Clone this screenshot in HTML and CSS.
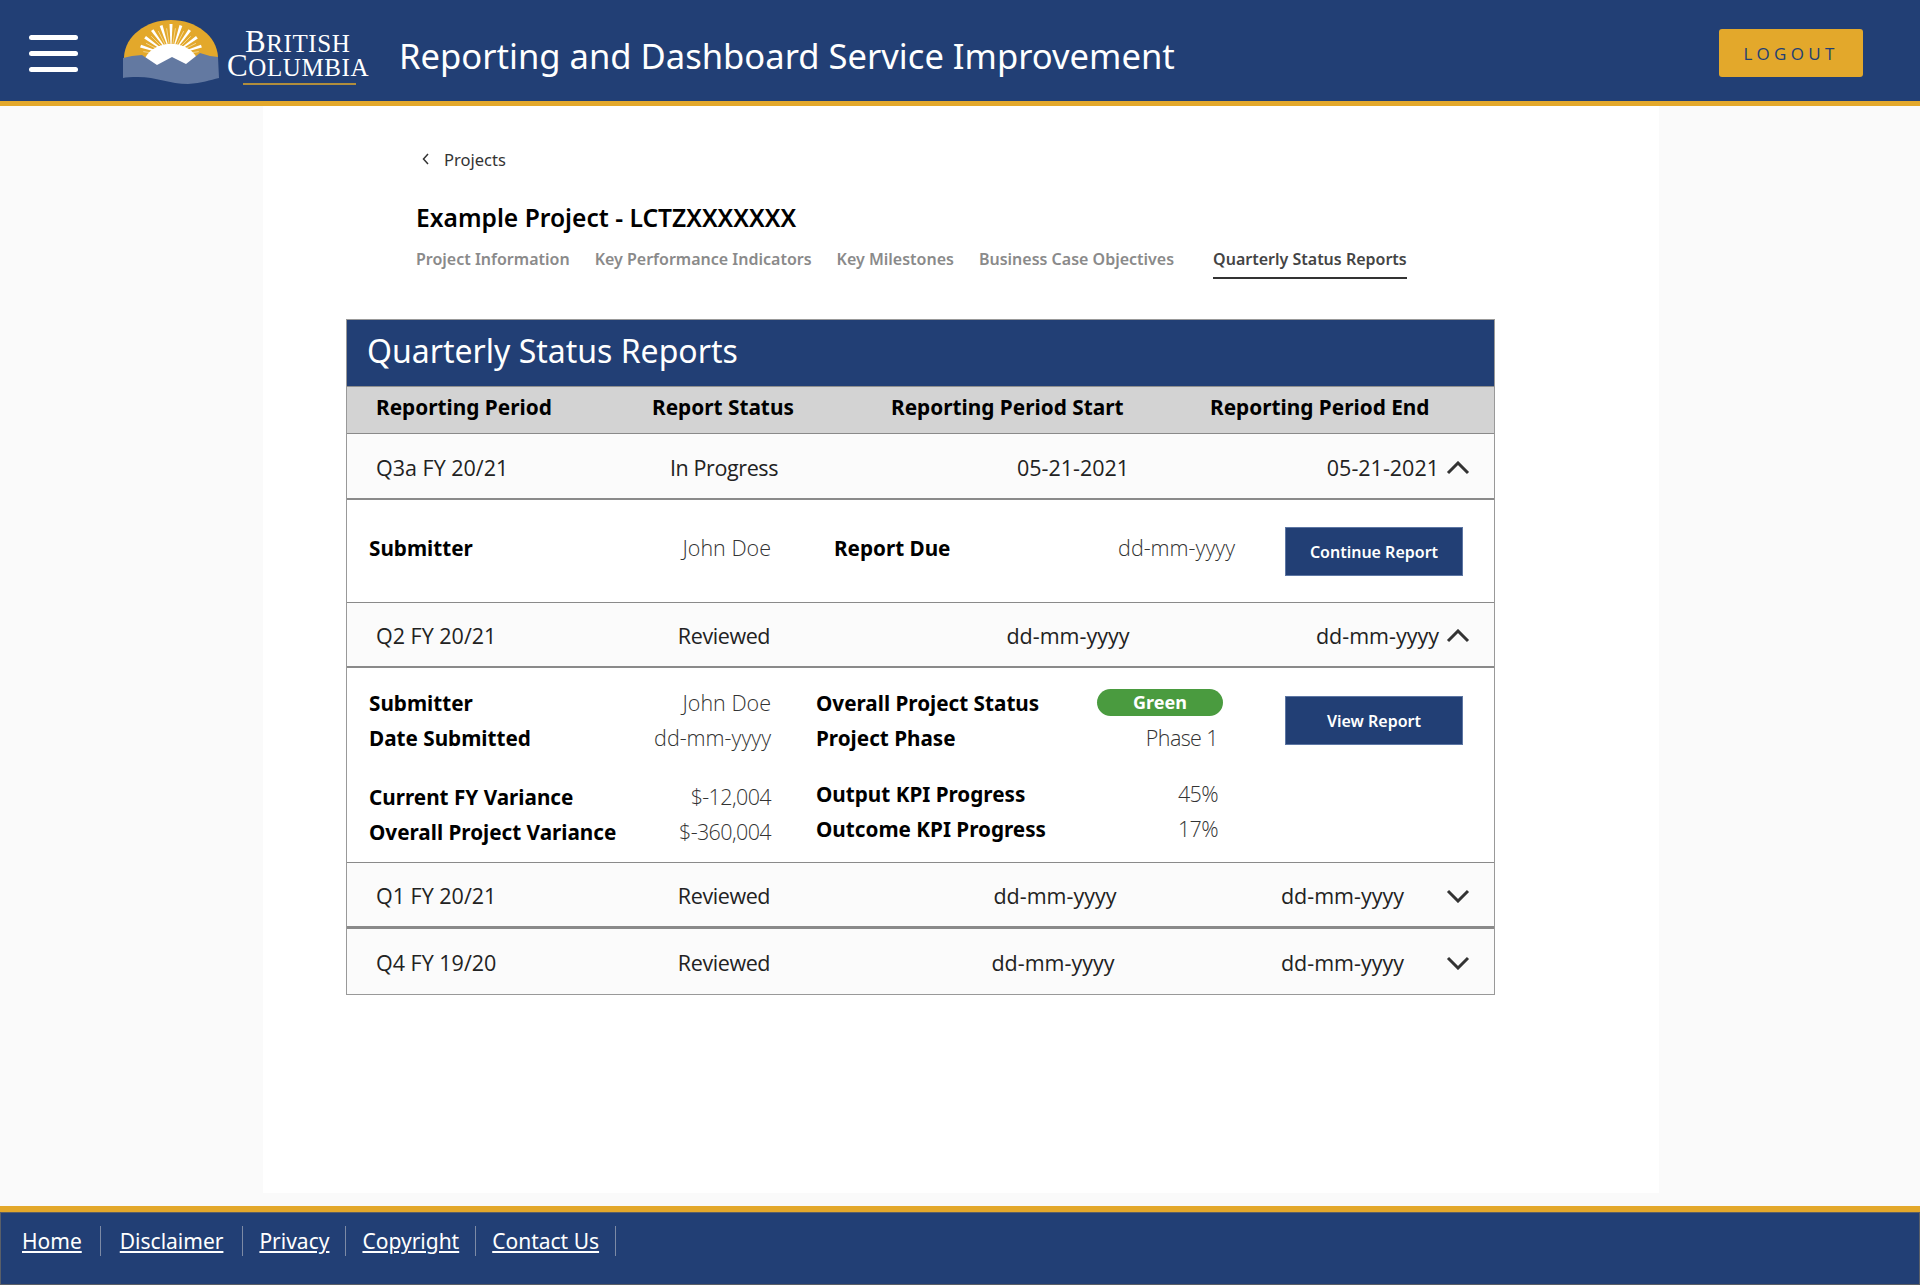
FILE: index.html
```html
<!doctype html>
<html lang="en">
  <head>
    <title>Reporting and Dashboard Service Improvement</title>
    <meta charset="utf-8" />
    <link rel="stylesheet" href="styles.css">
  </head>
  <body>
    <header class="site_header">
      <div class="hamburger"><span></span><span></span><span></span></div>
      <div class="logo">
        <svg class="logo_mark" width="100" height="68" viewBox="0 0 100 68">
          <path d="M2 40 L2 37 C3 16 24 0 49 0 C74 0 95 16 96 37 L96 40 Z" fill="#e3a82b"/>
          <g fill="#fff">
            <path d="M49 36 L47.500 4 L50.500 4 Z"/>
            <path d="M49 36 L57.500 5.100 L60.300 6.100 Z"/>
            <path d="M49 36 L66.600 9.200 L69 11 Z"/>
            <path d="M49 36 L74 16 L75.800 18.400 Z"/>
            <path d="M49 36 L78.900 24.700 L79.900 27.500 Z"/>
            <path d="M49 36 L40.500 5.100 L37.700 6.100 Z"/>
            <path d="M49 36 L31.400 9.200 L29 11 Z"/>
            <path d="M49 36 L24 16 L22.200 18.400 Z"/>
            <path d="M49 36 L19.100 24.700 L18.100 27.500 Z"/>
          </g>
          <path d="M49 36 L53.400 8.300 M49 36 L61.700 11.100 M49 36 L68.800 16.200 M49 36 L74 23.300 M49 36 L76.700 31.600 M49 36 L44.600 8.300 M49 36 L36.300 11.100 M49 36 L29.200 16.200 M49 36 L24 23.300 M49 36 L21.300 31.600" stroke="#f6dfa6" stroke-width="0.8" fill="none"/>
          <path d="M21 46 C22 32 35 24 49 24 C63 24 76 32 77 46 Z" fill="#fff"/>
          <path d="M1 38 L10 36 L20 35 L35 45 L50 37 L64 44 L78 33 L88 36 L96 37 L97 58 C88 60 80 63 66 64 C48 64 34 57 16 57 C9 57 4 57 1 58 Z" fill="#6379a1"/>
        </svg>
        <div class="logo_text">
          <div class="logo_line1"><span class="cap">B</span>RITISH</div>
          <div class="logo_line2"><span class="cap">C</span>OLUMBIA</div>
          <div class="logo_rule"></div>
        </div>
      </div>
      <h1 class="app_title">Reporting and Dashboard Service Improvement</h1>
      <button class="logout">LOGOUT</button>
    </header>

    <main class="page">
      <div class="page_head">
        <a class="back" href="#">
          <svg width="10" height="14" viewBox="0 0 10 14"><path d="M7 2 L2.5 7 L7 12" fill="none" stroke="#333" stroke-width="1.5"/></svg>
          <span>Projects</span>
        </a>
        <h2 class="project_name">Example Project - LCTZXXXXXXX</h2>
        <nav class="tabs">
          <a href="#">Project Information</a>
          <a href="#">Key Performance Indicators</a>
          <a href="#">Key Milestones</a>
          <a href="#">Business Case Objectives</a>
          <a href="#" class="tab_active">Quarterly Status Reports</a>
        </nav>
      </div>

      <section class="reports">
        <h3 class="reports_title">Quarterly Status Reports</h3>
        <div class="reports_head">
          <div>Reporting Period</div>
          <div>Report Status</div>
          <div>Reporting Period Start</div>
          <div>Reporting Period End</div>
        </div>

        <!-- Q3a -->
        <div class="row row_q3a">
          <div>Q3a FY 20/21</div>
          <div class="status">In Progress</div>
          <div class="start">05-21-2021</div>
          <div class="end">05-21-2021</div>
          <svg class="chevron" width="24" height="14" viewBox="0 0 24 14"><path d="M2 12 L12 2 L22 12" fill="none" stroke="#333" stroke-width="3"/></svg>
        </div>
        <div class="detail detail_short">
          <div class="pair pair_left"><b>Submitter</b><span>John Doe</span></div>
          <div class="pair pair_due"><b>Report Due</b><span>dd-mm-yyyy</span></div>
          <button class="action">Continue Report</button>
        </div>

        <!-- Q2 -->
        <div class="row row_q2">
          <div>Q2 FY 20/21</div>
          <div class="status">Reviewed</div>
          <div class="start">dd-mm-yyyy</div>
          <div class="end">dd-mm-yyyy</div>
          <svg class="chevron" width="24" height="14" viewBox="0 0 24 14"><path d="M2 12 L12 2 L22 12" fill="none" stroke="#333" stroke-width="3"/></svg>
        </div>
        <div class="detail detail_full">
          <div class="col_left">
            <div class="pair"><b>Submitter</b><span>John Doe</span></div>
            <div class="pair"><b>Date Submitted</b><span>dd-mm-yyyy</span></div>
            <div class="pair pair_gap"><b>Current FY Variance</b><span class="num">$-12,004</span></div>
            <div class="pair"><b>Overall Project Variance</b><span class="num">$-360,004</span></div>
          </div>
          <div class="col_mid">
            <div class="pair"><b>Overall Project Status</b><em class="pill">Green</em></div>
            <div class="pair"><b>Project Phase</b><span class="num">Phase 1</span></div>
            <div class="pair pair_gap2"><b>Output KPI Progress</b><span class="num">45%</span></div>
            <div class="pair"><b>Outcome KPI Progress</b><span class="num">17%</span></div>
          </div>
          <button class="action">View Report</button>
        </div>

        <!-- Q1 -->
        <div class="row row_q1">
          <div>Q1 FY 20/21</div>
          <div class="status">Reviewed</div>
          <div class="start">dd-mm-yyyy</div>
          <div class="end">dd-mm-yyyy</div>
          <svg class="chevron" width="24" height="14" viewBox="0 0 24 14"><path d="M2 2 L12 12 L22 2" fill="none" stroke="#333" stroke-width="3"/></svg>
        </div>

        <!-- Q4 -->
        <div class="row row_q4">
          <div>Q4 FY 19/20</div>
          <div class="status">Reviewed</div>
          <div class="start">dd-mm-yyyy</div>
          <div class="end">dd-mm-yyyy</div>
          <svg class="chevron" width="24" height="14" viewBox="0 0 24 14"><path d="M2 2 L12 12 L22 2" fill="none" stroke="#333" stroke-width="3"/></svg>
        </div>
      </section>
    </main>

    <footer class="site_footer">
      <a href="#">Home</a>
      <a href="#">Disclaimer</a>
      <a href="#">Privacy</a>
      <a href="#">Copyright</a>
      <a href="#">Contact Us</a>
    </footer>
  </body>
</html>
```

FILE: styles.css
```css
/* Whole page */
*{
  box-sizing: border-box;
}
body{
  margin: 0;
  min-height: 1285px;
  display: flex;
  flex-direction: column;
  background-color: #fafafa;
  color: #000;
  font-family: "Noto Sans", sans-serif;
}
h1, h2, h3{
  margin: 0;
  font-weight: 400;
}

/* Header */
.site_header{
  height: 106px;
  display: flex;
  align-items: center;
  padding: 5px 57px 0 29px;
  background-color: #223f75;
  border-bottom: 5px solid #e3a82b;
}
.hamburger{
  width: 49px;
  display: flex;
  flex-direction: column;
  gap: 11px;
  margin-right: 44px;
}
.hamburger span{
  height: 5px;
  border-radius: 3px;
  background-color: #fff;
}
.logo{
  display: flex;
  align-items: flex-start;
  width: 277px;
  height: 68px;
  margin-top: 2px;
}
.logo_mark{
  flex: none;
}
.logo_text{
  margin-left: 5px;
  padding-top: 12px;
  color: #fff;
  font-family: "Liberation Serif", serif;
  font-size: 25px;
  line-height: 24px;
}
.cap{
  font-size: 31px;
  line-height: 0;
}
.logo_line1{
  padding-left: 18px;
  letter-spacing: 0.6px;
}
.logo_line2{
  letter-spacing: 0.6px;
  white-space: nowrap;
}
.logo_rule{
  height: 2px;
  width: 113px;
  margin: 3px 0 0 16px;
  background-color: #b08d3c;
}
.app_title{
  margin-top: 4px;
  color: #fff;
  font-size: 34.6px;
  white-space: nowrap;
}
.logout{
  margin-left: auto;
  width: 144px;
  height: 48px;
  border: 0;
  border-radius: 3px;
  background-color: #e3a82b;
  color: #223f75;
  font-family: "Open Sans", sans-serif;
  font-size: 17px;
  letter-spacing: 4.3px;
}

/* White panel */
.page{
  width: 1396px;
  height: 1087px;
  margin: 0 auto 13px 263px;
  background-color: #fff;
  padding-left: 83px;
}
.page_head{
  padding-left: 70px;
}
.back{
  display: flex;
  align-items: center;
  gap: 13px;
  height: 24px;
  margin-top: 41px;
  padding-left: 5px;
  color: #333;
  font-size: 16.5px;
  text-decoration: none;
}
.project_name{
  margin-top: 30px;
  font-size: 24.6px;
  line-height: 34px;
  font-weight: 600;
}
.tabs{
  display: flex;
  margin-top: 9px;
  height: 35px;
}
.tabs a{
  margin-right: 25px;
  padding-top: 4px;
  color: #8a8a8a;
  font-size: 16px;
  font-weight: 600;
  text-decoration: none;
}
.tabs a:nth-child(4){
  margin-right: 39px;
}
.tabs .tab_active{
  color: #444;
  border-bottom: 2px solid #333;
}

/* Reports table */
.reports{
  width: 1149px;
  margin-top: 40px;
  border: 1px solid #999;
}
.reports_title{
  height: 66px;
  padding: 13px 0 0 20px;
  background-color: #223f75;
  color: #fff;
  font-size: 32px;
  line-height: 36px;
}
.reports_head{
  height: 47px;
  display: grid;
  grid-template-columns: 276px 239px 319px auto;
  padding: 0 0 7px 29px;
  align-items: center;
  background-color: #d3d3d3;
  border-top: 1px solid #8f8f8f;
  font-size: 20.8px;
  font-weight: 700;
}
.row{
  height: 66px;
  display: grid;
  align-items: center;
  padding: 2px 0 0 29px;
  background-color: #fbfbfb;
  border-top: 1px solid #8a8a8a;
  border-bottom: 2px solid #8a8a8a;
  font-family: "Open Sans", sans-serif;
  font-size: 21.5px;
  color: #222;
}
.row_q3a{
  height: 67px;
  grid-template-columns: 224px 248px 450px 141px 38px;
}
.row_q2{
  grid-template-columns: 224px 248px 440px 151px 38px;
}
.row_q1{
  grid-template-columns: 224px 248px 414px 142px 73px;
}
.row_q4{
  border-bottom: 0;
  grid-template-columns: 224px 248px 410px 146px 73px;
}
.status{
  letter-spacing: -0.4px;
}
.status, .start{
  text-align: center;
}
.end{
  text-align: right;
  white-space: nowrap;
}
.chevron{
  justify-self: end;
  margin: 1px 7px 0 0;
}

/* Expanded rows */
.detail{
  display: flex;
  padding-left: 22px;
  background-color: #fff;
}
.detail_short{
  height: 102px;
  padding-top: 30px;
}
.detail_full{
  height: 194px;
  padding-top: 17px;
}
.pair{
  display: flex;
  justify-content: space-between;
  align-items: center;
  height: 35px;
  font-size: 20.7px;
}
.pair b{
  font-weight: 700;
}
.pair span{
  font-family: "Open Sans", sans-serif;
  font-size: 21.5px;
  font-weight: 300;
  color: #333;
}
.pair .num{
  letter-spacing: -0.6px;
}
.pair_left{
  width: 402px;
}
.pair_due{
  width: 401px;
  margin-left: 63px;
}
.detail_short .action{
  margin-left: 50px;
  margin-top: -3px;
}
.col_left{
  width: 402px;
}
.col_mid{
  width: 402px;
  margin-left: 45px;
}
.pair_gap{
  margin-top: 24px;
}
.pair_gap2{
  margin-top: 21px;
}
.pill{
  width: 126px;
  height: 27px;
  margin-right: -5px;
  border-radius: 14px;
  background-color: #4a9b3f;
  color: #fff;
  font-style: normal;
  font-weight: 700;
  font-size: 18px;
  line-height: 26px;
  text-align: center;
}
.action{
  flex: none;
  width: 178px;
  height: 49px;
  border: 1px solid #5d76a3;
  background-color: #223f75;
  color: #fff;
  font-family: "Noto Sans", sans-serif;
  font-size: 16px;
  font-weight: 600;
}
.detail_full .action{
  margin-left: 67px;
  margin-top: 11px;
}

/* Footer */
.site_footer{
  height: 79px;
  display: flex;
  align-items: flex-start;
  padding: 14px 0 0 22px;
  background-color: #223f75;
  border-top: 6px solid #e3a82b;
  box-shadow: inset 0 0 0 1px #5a5f68;
  font-size: 21px;
}
.site_footer a{
  padding-right: 16px;
  margin-right: 16px;
  border-right: 1px solid #7d8aa5;
  color: #fff;
  line-height: 30px;
  text-underline-offset: 2px;
}
.site_footer a:nth-child(1){
  padding-right: 18px;
  margin-right: 19px;
}
.site_footer a:nth-child(2){
  padding-right: 19px;
  margin-right: 16px;
}
```
